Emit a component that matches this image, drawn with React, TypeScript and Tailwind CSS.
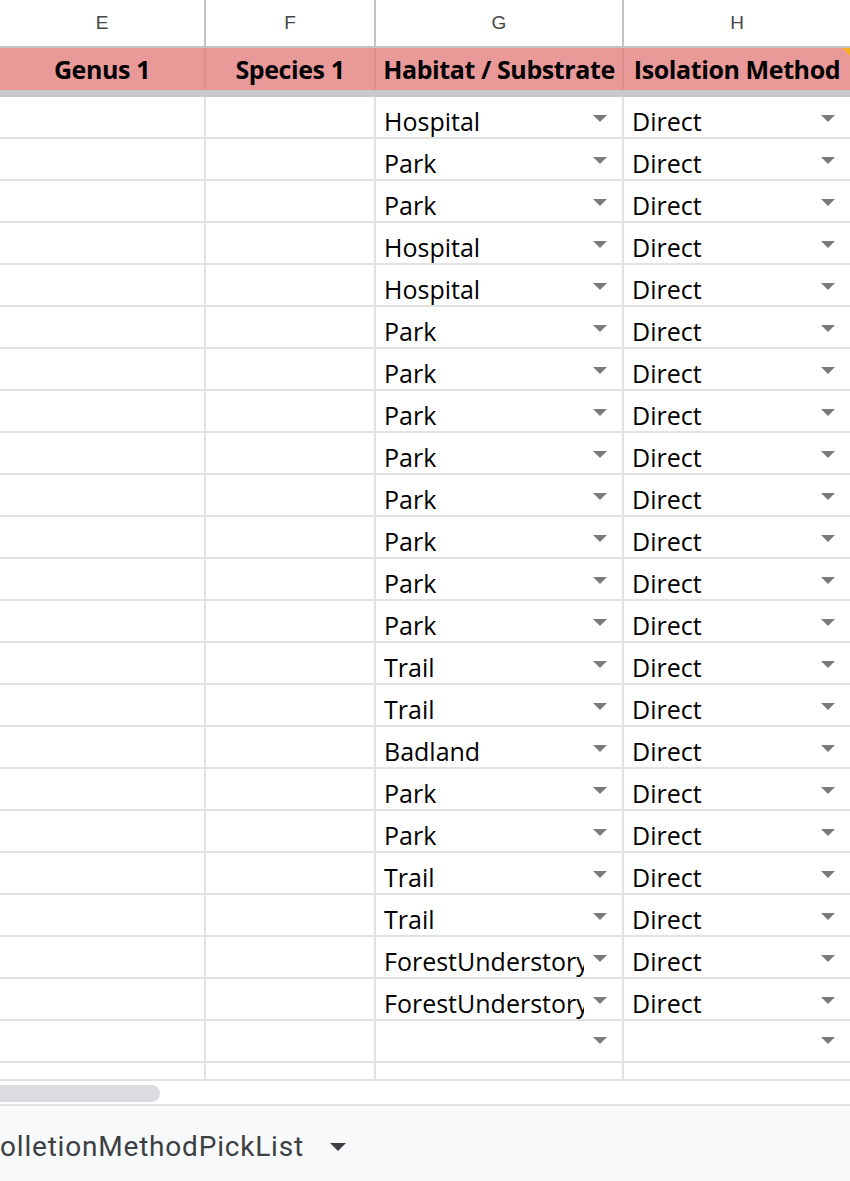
import React from "react"

const habitats = [
  "Hospital", "Park", "Park", "Hospital", "Hospital", "Park", "Park", "Park", "Park", "Park", "Park",
  "Park", "Park", "Trail", "Trail", "Badland", "Park", "Park", "Trail", "Trail",
  "ForestUnderstory", "ForestUnderstory",
]

const cols = "grid grid-cols-[206px_170px_248px_226px]"

function Arrow() {
  return (
    <svg width="14" height="8" viewBox="0 0 14 8" className="shrink-0">
      <path d="M0 0 L14 0 L7 7 Z" fill="#7a7a7a" />
    </svg>
  )
}

function DropCell({ value, last }: { value: string; last?: boolean }) {
  return (
    <div className={`flex items-center h-full pl-2 pr-[15px] ${last ? "" : "border-r-2 border-[#e2e2e2]"}`}>
      <span className="flex-1 min-w-0 overflow-hidden whitespace-nowrap mr-[9px] pt-[6px]">{value}</span>
      <Arrow />
    </div>
  )
}

export default function App() {
  return (
    <div className="w-[850px] h-[1181px] overflow-hidden bg-white flex flex-col" style={{ fontFamily: "'Open Sans', sans-serif" }}>
      {/* column letters */}
      <div className={`${cols} h-[48px] border-b-2 border-[#c4c4c4] text-[19px] text-[#444746]`} style={{ fontFamily: "'Liberation Sans', Arial, sans-serif" }}>
        {["E", "F", "G", "H"].map((c, i) => (
          <div key={c} className={`flex items-center justify-center ${i < 3 ? "border-r-2 border-[#c4c4c4]" : ""}`}>{c}</div>
        ))}
      </div>

      {/* header row */}
      <div className={`${cols} h-[42px] bg-[#ea9999] text-[25px] font-bold text-black relative`}>
        {["Genus 1", "Species 1", "Habitat / Substrate", "Isolation Method"].map((h, i) => (
          <div key={h} className={`flex items-center justify-center whitespace-nowrap overflow-hidden tracking-[-0.4px] pt-[2px] ${i < 3 ? "border-r-2 border-[#dc8d8d]" : ""}`}>{h}</div>
        ))}
        <div className="absolute right-0 top-0 w-0 h-0 border-l-[8px] border-l-transparent border-t-[8px] border-t-[#f6b026]" />
      </div>

      {/* frozen divider */}
      <div className="h-[7px] bg-[#c7c9ca]" />

      {/* data rows */}
      <div className="text-[25px] text-black">
        {habitats.map((h, i) => (
          <div key={i} className={`${cols} h-[42px] border-b-2 border-[#e2e2e2]`}>
            <div className="border-r-2 border-[#e2e2e2]" />
            <div className="border-r-2 border-[#e2e2e2]" />
            <DropCell value={h} />
            <DropCell value="Direct" last />
          </div>
        ))}
        <div className={`${cols} h-[42px] border-b-2 border-[#e2e2e2]`}>
          <div className="border-r-2 border-[#e2e2e2]" />
          <div className="border-r-2 border-[#e2e2e2]" />
          <DropCell value="" />
          <DropCell value="" last />
        </div>
        <div className={`${cols} h-[18px] border-b-2 border-[#e2e2e2]`}>
          <div className="border-r-2 border-[#e2e2e2]" />
          <div className="border-r-2 border-[#e2e2e2]" />
          <div className="border-r-2 border-[#e2e2e2]" />
          <div />
        </div>
      </div>

      {/* horizontal scrollbar */}
      <div className="h-[25px] flex items-center border-b-2 border-[#e2e2e2] pt-[2px]">
        <div className="w-[160px] h-[17px] rounded-r-full bg-[#dadce0]" />
      </div>

      {/* sheet tab bar */}
      <div className="flex-1 bg-[#f8f9fa] flex items-start pt-[20px]">
        <div className="flex items-center gap-[26px] ml-[-19px] text-[28px] text-[#3c4043] tracking-[0.8px]" style={{ fontFamily: "Roboto, sans-serif" }}>
          <span>ColletionMethodPickList</span>
          <svg width="16" height="8" viewBox="0 0 16 8">
            <path d="M0 0 L16 0 L8 8 Z" fill="#3c4043" />
          </svg>
        </div>
      </div>
    </div>
  )
}
